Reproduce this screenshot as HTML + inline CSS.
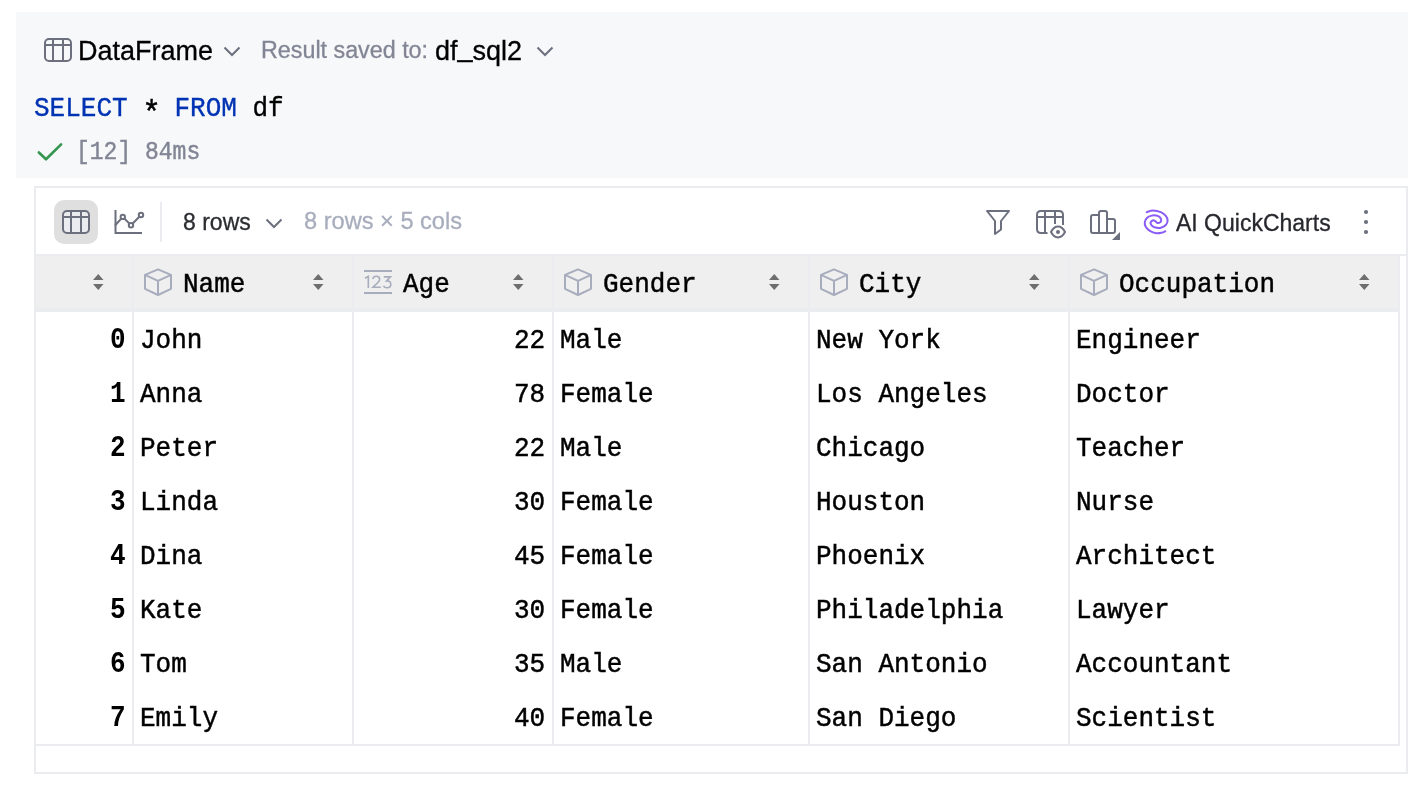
<!DOCTYPE html>
<html><head><meta charset="utf-8"><style>
html,body{margin:0;padding:0;width:1416px;height:790px;overflow:hidden;background:#fff}
.t,.m,.hd,.cell{will-change:transform}
.abs{position:absolute}
.t{position:absolute;white-space:pre;font-family:"Liberation Sans",sans-serif;-webkit-text-stroke-width:0.3px}
.m{position:absolute;white-space:pre;font-family:"Liberation Mono",monospace}
.hd{position:absolute;top:272px;font-family:"Liberation Mono",monospace;font-size:26px;line-height:26px;font-weight:400;color:#000;white-space:pre;transform:scaleY(1.08);transform-origin:0 20px;-webkit-text-stroke:0.45px #000}
.cell{position:absolute;font-family:"Liberation Mono",monospace;font-size:26px;line-height:26px;color:#000;white-space:pre;transform:scaleY(1.08);transform-origin:0 20px;-webkit-text-stroke:0.45px #000}
.idx{font-weight:700;-webkit-text-stroke:0;transform:scaleY(1.15)}
</style></head><body>
<!-- cell header -->
<div class="abs" style="left:16px;top:12px;width:1392px;height:166px;background:#f7f8fa"></div>
<svg class="abs" style="left:43px;top:37px" width="30" height="26" viewBox="0 0 30 26"><rect x="2" y="2" width="26" height="22" rx="4" fill="none" stroke="#6c707e" stroke-width="2"/><path d="M2 8 H28 M10 2 V24 M20 2 V24" stroke="#6c707e" stroke-width="2"/></svg>
<div class="t" style="left:78px;top:38px;font-size:27px;line-height:27px;color:#000">DataFrame</div>
<svg class="abs" style="left:222px;top:45px" width="20" height="13" viewBox="0 0 20 13"><path d="M2.5 2.5 L10 10 L17.5 2.5" fill="none" stroke="#6c707e" stroke-width="2"/></svg>
<div class="t" style="left:261px;top:39px;font-size:23.3px;line-height:23px;color:#818594">Result saved to:</div>
<div class="t" style="left:435px;top:38px;font-size:27px;line-height:27px;color:#000">df<span style="display:inline-block;transform:translateY(-4px)">_</span>sql2</div>
<svg class="abs" style="left:535px;top:45px" width="20" height="13" viewBox="0 0 20 13"><path d="M2.5 2.5 L10 10 L17.5 2.5" fill="none" stroke="#6c707e" stroke-width="2"/></svg>
<div class="m" style="left:34px;top:96px;font-size:26px;line-height:26px;color:#000;transform:scaleY(1.08);transform-origin:0 20px;-webkit-text-stroke:0.35px currentColor"><span style="color:#0033b3">SELECT</span> <span style="display:inline-block;transform:translate(0.7px,5px) scale(1.2)">*</span> <span style="color:#0033b3">FROM</span> df</div>
<svg class="abs" style="left:36px;top:142px" width="28" height="21" viewBox="0 0 28 21"><path d="M2.9 10.5 L10 17.3 L25.1 2.4" fill="none" stroke="#369650" stroke-width="2.7" stroke-linecap="round" stroke-linejoin="round"/></svg>
<div class="m" style="left:75.5px;top:142px;font-size:23px;line-height:23px;color:#818594;transform:scaleY(1.1);transform-origin:0 17px;-webkit-text-stroke:0.4px #818594">[12] 84ms</div>

<!-- table outer -->
<div class="abs" style="left:34px;top:186px;width:1370px;height:584px;border:2px solid #ebecf0"></div>
<!-- toolbar -->
<div class="abs" style="left:54px;top:200px;width:44px;height:44px;border-radius:10px;background:#dfdfdf"></div>
<svg class="abs" style="left:61px;top:209px" width="30" height="26" viewBox="0 0 30 26"><rect x="2" y="2" width="26" height="22" rx="4" fill="#ebecf0" stroke="#6c707e" stroke-width="2"/><path d="M2 8 H28 M10 2 V24 M20 2 V24" stroke="#6c707e" stroke-width="2"/></svg>
<svg class="abs" style="left:112px;top:208px" width="34" height="28" viewBox="0 0 34 28"><path d="M3.5 2 V25 H30" fill="none" stroke="#6c707e" stroke-width="2"/><path d="M3.5 17 L10.8 8.9 L19 17.3 L29 7" fill="none" stroke="#6c707e" stroke-width="2" stroke-linecap="round"/><circle cx="10.8" cy="8.9" r="2.2" fill="#fff" stroke="#6c707e" stroke-width="2"/><circle cx="19" cy="17.3" r="2.2" fill="#fff" stroke="#6c707e" stroke-width="2"/><circle cx="29" cy="7" r="2.2" fill="#fff" stroke="#6c707e" stroke-width="2"/></svg>
<div class="abs" style="left:160px;top:202px;width:2px;height:40px;background:#ebecf0"></div>
<div class="t" style="left:183px;top:211px;font-size:23px;line-height:23px;color:#2b2d30">8 rows</div>
<svg class="abs" style="left:264px;top:217px" width="20" height="13" viewBox="0 0 20 13"><path d="M2.5 2.5 L10 10 L17.5 2.5" fill="none" stroke="#6c707e" stroke-width="2"/></svg>
<div class="t" style="left:304px;top:210px;font-size:23.6px;line-height:23px;color:#a8adbd">8 rows × 5 cols</div>

<svg class="abs" style="left:982px;top:206px" width="32" height="32" viewBox="982 206 32 32"><path d="M987 211 H1009 L1001 221 V229.5 L995 234 V221 Z" fill="none" stroke="#6c707e" stroke-width="2" stroke-linejoin="round"/></svg>
<svg class="abs" style="left:1034px;top:206px" width="36" height="36" viewBox="1034 206 36 36"><path d="M1047.5 233 H1041 Q1037 233 1037 229 V215 Q1037 211 1041 211 H1059 Q1063 211 1063 215 V225 M1037 217 H1063 M1045 211 V233 M1055 211 V224" fill="none" stroke="#6c707e" stroke-width="2"/><path d="M1051 232 C1053.5 227.3 1056 226.6 1058 226.6 C1060 226.6 1062.5 227.3 1065 232 C1062.5 236.7 1060 237.4 1058 237.4 C1056 237.4 1053.5 236.7 1051 232 Z" fill="none" stroke="#6c707e" stroke-width="2"/><circle cx="1058" cy="232" r="2" fill="#6c707e"/></svg>
<svg class="abs" style="left:1086px;top:206px" width="36" height="36" viewBox="1086 206 36 36"><path d="M1093 215 H1099 V233 H1093 Q1091 233 1091 231 V217 Q1091 215 1093 215 Z M1099 213 Q1099 211 1101 211 H1105 Q1107 211 1107 213 V233 H1099 Z M1107 219 H1113 Q1115 219 1115 221 V231 Q1115 233 1113 233 H1107 Z" fill="none" stroke="#6c707e" stroke-width="2" stroke-linejoin="round"/><path d="M1112 240 H1120 V232 Z" fill="#6c707e"/></svg>
<svg class="abs" style="left:1138px;top:204px" width="36" height="36" viewBox="0 0 36 36"><path d="M8.7,8.2 C9.75,7.93 12.65,6.60 15,6.6 C17.35,6.60 20.67,7.32 22.8,8.2 C24.93,9.08 26.67,10.53 27.8,11.9 C28.93,13.27 29.60,14.88 29.6,16.4 C29.60,17.92 28.93,19.78 27.8,21 C26.67,22.22 24.55,23.28 22.8,23.7 C21.05,24.12 18.82,23.88 17.3,23.5 C15.78,23.12 14.50,22.13 13.7,21.4 C12.90,20.67 12.50,19.82 12.5,19.1 C12.50,18.38 13.12,17.55 13.7,17.1 C14.28,16.65 15.28,16.28 16,16.4 C16.72,16.52 17.40,17.35 18,17.8 C18.60,18.25 18.88,19.03 19.6,19.1 C20.32,19.17 21.70,18.72 22.3,18.2 C22.90,17.68 23.27,16.83 23.2,16 C23.13,15.17 22.73,13.93 21.9,13.2 C21.07,12.47 19.57,11.87 18.2,11.6 C16.83,11.33 15.22,11.25 13.7,11.6 C12.18,11.95 10.25,12.60 9.1,13.7 C7.95,14.80 7.03,16.68 6.8,18.2 C6.57,19.72 6.85,21.35 7.7,22.8 C8.55,24.25 10.15,25.83 11.9,26.9 C13.65,27.97 16.23,28.90 18.2,29.2 C20.17,29.50 22.18,29.02 23.7,28.7 C25.22,28.38 26.70,27.53 27.3,27.3" fill="none" stroke="#8b5cf6" stroke-width="2" stroke-linecap="round"/></svg>
<div class="t" style="left:1176px;top:212px;font-size:23px;line-height:23px;color:#27282e">AI QuickCharts</div>
<svg class="abs" style="left:1362px;top:208px" width="8" height="28" viewBox="0 0 8 28"><circle cx="4" cy="4" r="2.1" fill="#6c707e"/><circle cx="4" cy="14" r="2.1" fill="#6c707e"/><circle cx="4" cy="24" r="2.1" fill="#6c707e"/></svg>

<!-- toolbar bottom border -->
<div class="abs" style="left:36px;top:254px;width:1370px;height:2px;background:#ebecf0"></div>
<!-- header -->
<div class="abs" style="left:36px;top:256px;width:1362px;height:52px;background:#efefef"></div>
<div class="abs" style="left:36px;top:308px;width:1362px;height:4px;background:#ebecf0"></div>
<div class="abs" style="left:132px;top:256px;width:2px;height:490px;background:#ebecf0"></div><div class="abs" style="left:352px;top:256px;width:2px;height:490px;background:#ebecf0"></div><div class="abs" style="left:552px;top:256px;width:2px;height:490px;background:#ebecf0"></div><div class="abs" style="left:808px;top:256px;width:2px;height:490px;background:#ebecf0"></div><div class="abs" style="left:1068px;top:256px;width:2px;height:490px;background:#ebecf0"></div><div class="abs" style="left:1398px;top:256px;width:2px;height:490px;background:#ebecf0"></div>
<div class="abs" style="left:36px;top:744px;width:1364px;height:2px;background:#ebecf0"></div>
<svg class="abs" style="left:92.5px;top:273px" width="11" height="18" viewBox="0 0 11 18"><path d="M5.25 1 L10.5 7 H0 Z M0 11 H10.5 L5.25 17 Z" fill="#6e6e6e"/></svg><svg class="abs" style="left:144px;top:268px" width="28" height="28" viewBox="0 0 28 28"><path d="M14 1.3 L27 6.9 V20.8 L14 27 L1 20.8 V6.9 Z M1 6.9 L14 12.9 L27 6.9 M14 12.9 V27" fill="none" stroke="#a8adbd" stroke-width="2" stroke-linejoin="round"/></svg><div class="hd" style="left:183px">Name</div><svg class="abs" style="left:312.5px;top:273px" width="11" height="18" viewBox="0 0 11 18"><path d="M5.25 1 L10.5 7 H0 Z M0 11 H10.5 L5.25 17 Z" fill="#6e6e6e"/></svg><svg class="abs" style="left:364px;top:262px" width="40" height="40" viewBox="0 0 40 40"><path d="M0 9 H28 M0 31 H28" stroke="#a8adbd" stroke-width="2"/><path d="M1 16.3 L4.3 14.3 V26 M8.8 17 Q9.2 14.3 12.4 14.3 Q15.6 14.3 15.6 17.2 Q15.6 18.8 13.9 20.5 L9 25.2 H16.8 M19.8 14.9 H26.4 L22.6 18.9 Q26.8 18.7 26.8 22.3 Q26.8 25.8 23.1 25.8 Q20.6 25.8 19.4 23.8" fill="none" stroke="#a8adbd" stroke-width="1.6"/></svg><div class="hd" style="left:403px">Age</div><svg class="abs" style="left:512.5px;top:273px" width="11" height="18" viewBox="0 0 11 18"><path d="M5.25 1 L10.5 7 H0 Z M0 11 H10.5 L5.25 17 Z" fill="#6e6e6e"/></svg><svg class="abs" style="left:564px;top:268px" width="28" height="28" viewBox="0 0 28 28"><path d="M14 1.3 L27 6.9 V20.8 L14 27 L1 20.8 V6.9 Z M1 6.9 L14 12.9 L27 6.9 M14 12.9 V27" fill="none" stroke="#a8adbd" stroke-width="2" stroke-linejoin="round"/></svg><div class="hd" style="left:603px">Gender</div><svg class="abs" style="left:768.5px;top:273px" width="11" height="18" viewBox="0 0 11 18"><path d="M5.25 1 L10.5 7 H0 Z M0 11 H10.5 L5.25 17 Z" fill="#6e6e6e"/></svg><svg class="abs" style="left:820px;top:268px" width="28" height="28" viewBox="0 0 28 28"><path d="M14 1.3 L27 6.9 V20.8 L14 27 L1 20.8 V6.9 Z M1 6.9 L14 12.9 L27 6.9 M14 12.9 V27" fill="none" stroke="#a8adbd" stroke-width="2" stroke-linejoin="round"/></svg><div class="hd" style="left:859px">City</div><svg class="abs" style="left:1028.5px;top:273px" width="11" height="18" viewBox="0 0 11 18"><path d="M5.25 1 L10.5 7 H0 Z M0 11 H10.5 L5.25 17 Z" fill="#6e6e6e"/></svg><svg class="abs" style="left:1080px;top:268px" width="28" height="28" viewBox="0 0 28 28"><path d="M14 1.3 L27 6.9 V20.8 L14 27 L1 20.8 V6.9 Z M1 6.9 L14 12.9 L27 6.9 M14 12.9 V27" fill="none" stroke="#a8adbd" stroke-width="2" stroke-linejoin="round"/></svg><div class="hd" style="left:1119px">Occupation</div><svg class="abs" style="left:1358.5px;top:273px" width="11" height="18" viewBox="0 0 11 18"><path d="M5.25 1 L10.5 7 H0 Z M0 11 H10.5 L5.25 17 Z" fill="#6e6e6e"/></svg><div class="cell idx" style="right:1290px;top:328px">0</div><div class="cell" style="left:140px;top:328px">John</div><div class="cell" style="right:871px;top:328px">22</div><div class="cell" style="left:560px;top:328px">Male</div><div class="cell" style="left:816px;top:328px">New York</div><div class="cell" style="left:1076px;top:328px">Engineer</div><div class="cell idx" style="right:1290px;top:382px">1</div><div class="cell" style="left:140px;top:382px">Anna</div><div class="cell" style="right:871px;top:382px">78</div><div class="cell" style="left:560px;top:382px">Female</div><div class="cell" style="left:816px;top:382px">Los Angeles</div><div class="cell" style="left:1076px;top:382px">Doctor</div><div class="cell idx" style="right:1290px;top:436px">2</div><div class="cell" style="left:140px;top:436px">Peter</div><div class="cell" style="right:871px;top:436px">22</div><div class="cell" style="left:560px;top:436px">Male</div><div class="cell" style="left:816px;top:436px">Chicago</div><div class="cell" style="left:1076px;top:436px">Teacher</div><div class="cell idx" style="right:1290px;top:490px">3</div><div class="cell" style="left:140px;top:490px">Linda</div><div class="cell" style="right:871px;top:490px">30</div><div class="cell" style="left:560px;top:490px">Female</div><div class="cell" style="left:816px;top:490px">Houston</div><div class="cell" style="left:1076px;top:490px">Nurse</div><div class="cell idx" style="right:1290px;top:544px">4</div><div class="cell" style="left:140px;top:544px">Dina</div><div class="cell" style="right:871px;top:544px">45</div><div class="cell" style="left:560px;top:544px">Female</div><div class="cell" style="left:816px;top:544px">Phoenix</div><div class="cell" style="left:1076px;top:544px">Architect</div><div class="cell idx" style="right:1290px;top:598px">5</div><div class="cell" style="left:140px;top:598px">Kate</div><div class="cell" style="right:871px;top:598px">30</div><div class="cell" style="left:560px;top:598px">Female</div><div class="cell" style="left:816px;top:598px">Philadelphia</div><div class="cell" style="left:1076px;top:598px">Lawyer</div><div class="cell idx" style="right:1290px;top:652px">6</div><div class="cell" style="left:140px;top:652px">Tom</div><div class="cell" style="right:871px;top:652px">35</div><div class="cell" style="left:560px;top:652px">Male</div><div class="cell" style="left:816px;top:652px">San Antonio</div><div class="cell" style="left:1076px;top:652px">Accountant</div><div class="cell idx" style="right:1290px;top:706px">7</div><div class="cell" style="left:140px;top:706px">Emily</div><div class="cell" style="right:871px;top:706px">40</div><div class="cell" style="left:560px;top:706px">Female</div><div class="cell" style="left:816px;top:706px">San Diego</div><div class="cell" style="left:1076px;top:706px">Scientist</div>
</body></html>
